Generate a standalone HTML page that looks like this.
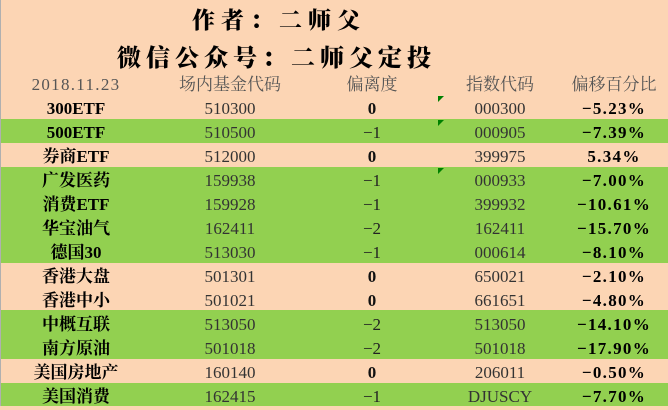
<!DOCTYPE html>
<html><head><meta charset="utf-8"><style>
*{margin:0;padding:0;box-sizing:border-box}
body{width:668px;height:406px;background:#fcd5b4;position:relative;overflow:hidden;font-family:"Liberation Serif","Noto Serif CJK SC",serif;}
.edge{position:absolute;left:0;top:0;width:1px;height:406px;background:#b0b0b0}
.g{position:absolute;left:1px;width:667px;background:#92d050}
.t{position:absolute;font-family:"Noto Serif CJK SC","WenQuanYi Zen Hei",serif;font-weight:900;color:#000;white-space:nowrap}
.row{position:absolute;left:0;width:668px;height:24px;font-size:17px;line-height:26px;color:#111}
.row span{position:absolute;text-align:center;white-space:nowrap}
.c1{left:0;width:152px;font-weight:bold;color:#000}
.c2{left:160px;width:140px;color:#333}
.c3{left:320px;width:104px;font-weight:bold}
.c3.n{font-weight:normal;color:#222}
.c4{left:440px;width:120px;color:#333}
.c5{left:562px;width:104px;font-weight:bold;color:#000;letter-spacing:1.3px}
.hd span{font-weight:normal!important;color:#555}
.tri{position:absolute;left:438px;width:0;height:0;border-top:6px solid #008000;border-right:6px solid transparent}
</style></head><body>
<div class="edge"></div>
<div class="g" style="top:119px;height:24px"></div>
<div class="g" style="top:167px;height:96px"></div>
<div class="g" style="top:310px;height:49px"></div>
<div class="g" style="top:383px;height:23px"></div>
<div class="t" style="left:192px;top:2px;font-size:23px;letter-spacing:6px">作者：二师父</div>
<div class="t" style="left:117px;top:38px;font-size:24px;letter-spacing:5px">微信公众号：二师父定投</div>
<div class="row hd" style="top:72px"><span style="left:30px;width:92px;letter-spacing:1.3px">2018.11.23</span><span class="c2">场内基金代码</span><span class="c3">偏离度</span><span class="c4">指数代码</span><span class="c5" style="letter-spacing:0">偏移百分比</span></div>
<div class="tri" style="top:96px"></div><div class="tri" style="top:120px"></div><div class="tri" style="top:168px"></div>
<div class="row" style="top:96px"><span class="c1">300ETF</span><span class="c2">510300</span><span class="c3">0</span><span class="c4">000300</span><span class="c5">−5.23%</span></div>
<div class="row" style="top:120px"><span class="c1">500ETF</span><span class="c2">510500</span><span class="c3 n">−1</span><span class="c4">000905</span><span class="c5">−7.39%</span></div>
<div class="row" style="top:144px"><span class="c1">券商ETF</span><span class="c2">512000</span><span class="c3">0</span><span class="c4">399975</span><span class="c5">5.34%</span></div>
<div class="row" style="top:168px"><span class="c1">广发医药</span><span class="c2">159938</span><span class="c3 n">−1</span><span class="c4">000933</span><span class="c5">−7.00%</span></div>
<div class="row" style="top:192px"><span class="c1">消费ETF</span><span class="c2">159928</span><span class="c3 n">−1</span><span class="c4">399932</span><span class="c5">−10.61%</span></div>
<div class="row" style="top:216px"><span class="c1">华宝油气</span><span class="c2">162411</span><span class="c3 n">−2</span><span class="c4">162411</span><span class="c5">−15.70%</span></div>
<div class="row" style="top:240px"><span class="c1">德国30</span><span class="c2">513030</span><span class="c3 n">−1</span><span class="c4">000614</span><span class="c5">−8.10%</span></div>
<div class="row" style="top:264px"><span class="c1">香港大盘</span><span class="c2">501301</span><span class="c3">0</span><span class="c4">650021</span><span class="c5">−2.10%</span></div>
<div class="row" style="top:288px"><span class="c1">香港中小</span><span class="c2">501021</span><span class="c3">0</span><span class="c4">661651</span><span class="c5">−4.80%</span></div>
<div class="row" style="top:312px"><span class="c1">中概互联</span><span class="c2">513050</span><span class="c3 n">−2</span><span class="c4">513050</span><span class="c5">−14.10%</span></div>
<div class="row" style="top:336px"><span class="c1">南方原油</span><span class="c2">501018</span><span class="c3 n">−2</span><span class="c4">501018</span><span class="c5">−17.90%</span></div>
<div class="row" style="top:360px"><span class="c1">美国房地产</span><span class="c2">160140</span><span class="c3">0</span><span class="c4">206011</span><span class="c5">−0.50%</span></div>
<div class="row" style="top:384px"><span class="c1">美国消费</span><span class="c2">162415</span><span class="c3 n">−1</span><span class="c4">DJUSCY</span><span class="c5">−7.70%</span></div>
</body></html>
